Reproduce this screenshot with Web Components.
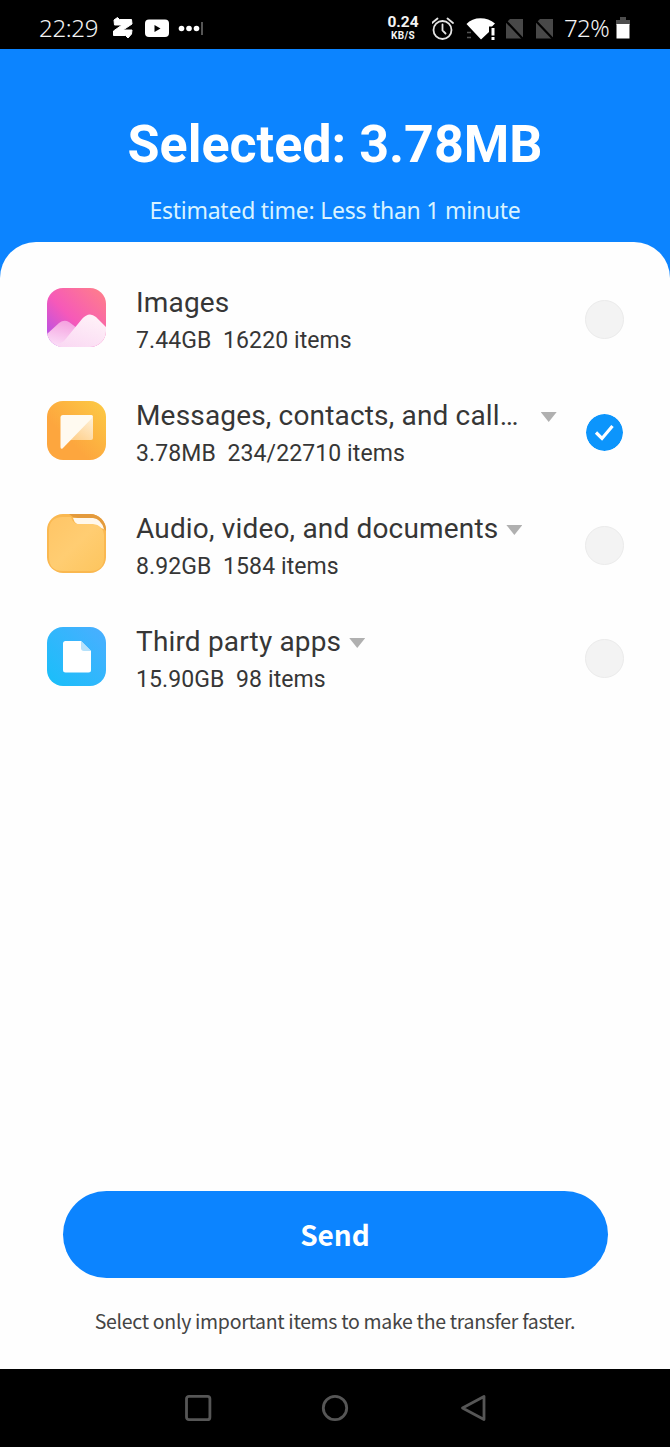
<!DOCTYPE html>
<html lang="en">
<head>
<meta charset="utf-8">
<title>Phone transfer</title>
<style>
  html, body {
    margin: 0;
    height: 100%;
    background: #0c84ff;
  }
</style>
</head>
<body>
<transfer-app></transfer-app>

<script>
/**
 * Status bar at the top of the phone
 */
class StatusBar extends HTMLElement {
  constructor() {
    super();
    this.attachShadow({ mode: 'open' });
    this.shadowRoot.innerHTML = `
      <style>
        :host {
          display: flex;
          justify-content: space-between;
          align-items: center;
          box-sizing: border-box;
          height: 49px;
          padding: 7px 40px 0 39px;
          background: #000;
          color: #f4f4f4;
          font: 300 24px/30px "Noto Sans", sans-serif;
        }

        .side {
          display: flex;
          align-items: center;
        }

        .clock {
          width: 73px;
          letter-spacing: -0.3px;
        }

        .speed {
          width: 32px;
          margin-right: 13px;
          text-align: center;
          font: bold 15.5px/15px Roboto, sans-serif;
        }

        .speed span {
          display: block;
        }

        .speed .unit {
          font-size: 10px;
          line-height: 12px;
          letter-spacing: 0.4px;
        }

        .battery {
          width: 45px;
          letter-spacing: -0.6px;
          margin-right: 7px;
        }

        svg {
          display: block;
          fill: #fff;
        }
      </style>
      <div class="side">
        <span class="clock">22:29</span>
        <svg width="92" height="24" viewBox="0 0 92 24">
          <path d="M2 4 5.500 1.500 7.500 3.500H19.500L20 8 11 14H20L19.500 18 16 22 13.500 19.500H1.500L1.500 15 10 9H2.500Z" stroke="#fff" stroke-linejoin="round"/>
          <rect x="33" y="3.500" width="24" height="17.500" rx="4"/>
          <path d="M42.500 9v7l6-3.500Z" fill="#000"/>
          <circle cx="69.500" cy="12.500" r="2.800"/>
          <circle cx="77" cy="12.500" r="2.800"/>
          <circle cx="84.500" cy="12.500" r="2.800"/>
          <path d="M89.500 6h1v13h-1z" fill="#aaa"/>
        </svg>
      </div>
      <div class="side">
        <div class="speed"><span>0.24</span><span class="unit">KB/S</span></div>
        <svg width="132" height="28" viewBox="0 0 132 28">
          <g fill="none" stroke="#e4e4e4" stroke-width="1.800" stroke-linecap="round">
            <circle cx="10.500" cy="16" r="9"/>
            <path d="M10.500 10.500v6l3 3M0 9 5.500 4.500M15.500 4.500 21 9"/>
          </g>
          <path d="M34.500 10C41 2.500 55 2.500 63 9.500L60 12.500h-3V18L49 25.500Z"/>
          <path d="M59.500 14h3v7.500h-3zM59.500 23h3v3h-3z"/>
          <path d="M35 18.500h4M35 23.500h4" stroke="#555" stroke-width="1.500"/>
          <path d="M78 5h13v19.500H74V9ZM108 5h13v19.500H104V9Z" fill="#484848"/>
          <path d="M72 5 92 26M102 5 122 26" stroke="#000" stroke-width="2.200"/>
        </svg>
        <span class="battery">72%</span>
        <svg width="14" height="22" viewBox="0 0 14 22">
          <path d="M4 0h6v3h4v5H0V3h4z" fill="#4d4d4d"/>
          <path d="M0.500 7h13v14.500h-13z"/>
        </svg>
      </div>
    `;
  }
}

/**
 * Rounded category icon, picked with the name attribute
 */
class CategoryIcon extends HTMLElement {
  constructor() {
    super();
    this.attachShadow({ mode: 'open' });
  }

  connectedCallback() {
    const shapes = {
      images: `
        <linearGradient id="bg" x1="0" y1="1" x2="1" y2="0">
          <stop offset="0" stop-color="#a94ff0"/>
          <stop offset=".45" stop-color="#f659b9"/>
          <stop offset="1" stop-color="#ff8187"/>
        </linearGradient>
        <linearGradient id="back" x1=".6" y1="0" x2=".3" y2="1">
          <stop offset="0" stop-color="#f5a0df"/>
          <stop offset="1" stop-color="#fbdff8"/>
        </linearGradient>
        <linearGradient id="front" x1=".8" y1="0" x2=".2" y2="1">
          <stop offset="0" stop-color="#fff2f8"/>
          <stop offset="1" stop-color="#fad9f3"/>
        </linearGradient>
        <rect width="59" height="59" fill="url(#bg)"/>
        <path d="M0 46 12 35Q17 31 22 34L34 43 32 59H0Z" fill="url(#back)"/>
        <path d="M7 59 17 53 35 31Q42 23 49 29L59 39V59Z" fill="url(#front)"/>`,
      messages: `
        <linearGradient id="bg" x1="0" y1="1" x2="1" y2="0">
          <stop offset=".35" stop-color="#fda63e"/>
          <stop offset="1" stop-color="#fccb45"/>
        </linearGradient>
        <linearGradient id="fold" x1="1" y1="0" x2=".3" y2="1">
          <stop offset="0" stop-color="#fff1d8"/>
          <stop offset="1" stop-color="#fed18f"/>
        </linearGradient>
        <rect width="59" height="59" fill="url(#bg)"/>
        <path d="M22 39H44Q46 39 46 37V16L40 19Z" fill="url(#fold)"/>
        <path d="M16 14H44.500Q46 14 46 16L15.500 47.500Q13.500 48.500 13.500 46V16.500Q13.500 14 16 14Z" fill="#fffaf0"/>`,
      files: `
        <linearGradient id="bg" x1="0" y1="0" x2="1" y2="1">
          <stop offset="0" stop-color="#ffc566"/>
          <stop offset=".5" stop-color="#ffcd72"/>
          <stop offset="1" stop-color="#fdc55e"/>
        </linearGradient>
        <rect width="59" height="59" fill="#fab850"/>
        <path d="M22 0H59V17L51 8 26 3Z" fill="#e39a3c"/>
        <path d="M26 4H46Q54 5 57 15L48 12 30 10Q27 8 26 4Z" fill="#fff8ec"/>
        <path d="M16 3H24Q26 10 31 10H46Q56 11 57 21V43Q57 57 43 57H16Q2 57 2 43V17Q2 3 16 3Z" fill="url(#bg)"/>`,
      apps: `
        <linearGradient id="bg" x1="0" y1="1" x2="1" y2="0">
          <stop offset="0" stop-color="#18bff9"/>
          <stop offset="1" stop-color="#4baeff"/>
        </linearGradient>
        <rect width="59" height="59" fill="url(#bg)"/>
        <path d="M18.500 14H34L44 24V43Q44 45.500 41.500 45.500H18.500Q16 45.500 16 43V16.500Q16 14 18.500 14Z" fill="#fff"/>
        <path d="M34 14 44 24H37Q34 24 34 21Z" fill="#b4e1fb"/>`
    };

    this.shadowRoot.innerHTML = `
      <style>
        :host {
          display: block;
          width: 59px;
          height: 59px;
          border-radius: 16px;
          overflow: hidden;
        }

        svg {
          display: block;
        }
      </style>
      <svg width="59" height="59" viewBox="0 0 59 59">${shapes[this.getAttribute('name')] || ''}</svg>
    `;
  }
}

/**
 * Round checkbox
 */
class RoundCheck extends HTMLElement {
  constructor() {
    super();
    this.attachShadow({ mode: 'open' });
    this.shadowRoot.innerHTML = `
      <style>
        :host {
          display: block;
          box-sizing: border-box;
          width: 39px;
          height: 39px;
          border: 1px solid #ebebeb;
          border-radius: 50%;
          background: #f3f3f3;
        }

        :host([checked]) {
          border-color: #fefefe;
          background: #0c95fc;
          background-clip: padding-box;
        }

        svg {
          display: none;
        }

        :host([checked]) svg {
          display: block;
        }
      </style>
      <svg width="37" height="37" viewBox="0 0 37 37">
        <path d="M10 18.500 16 24.500 26.500 12" fill="none" stroke="#fff" stroke-width="3.200"/>
      </svg>
    `;
  }
}

/**
 * One category: icon, slotted title and details, checkbox
 */
class CategoryRow extends HTMLElement {
  constructor() {
    super();
    this.attachShadow({ mode: 'open' });
  }

  connectedCallback() {
    const checked = this.hasAttribute('checked') ? 'checked' : '';
    this.shadowRoot.innerHTML = `
      <style>
        :host {
          display: grid;
          grid-template-columns: 59px 1fr 39px;
          column-gap: 30px;
          align-items: center;
          height: 113px;
          padding: 0 46px 0 47px;
          color: #363636;
          font-family: Roboto, sans-serif;
        }

        .text {
          padding-top: 10px;
          min-width: 0;
          white-space: nowrap;
        }

        .title {
          display: flex;
          align-items: center;
          height: 37px;
          font-size: 28px;
          letter-spacing: 0.17px;
        }

        .arrow {
          display: none;
          flex: none;
          width: 16px;
          height: 10px;
          margin: 3px 0 0 var(--arrow-gap, 8px);
          background: #b0b0b0;
          clip-path: polygon(0 0, 100% 0, 50% 100%);
        }

        :host([expandable]) .arrow {
          display: block;
        }

        .details {
          height: 40px;
          font-size: 23px;
          letter-spacing: 0.1px;
          line-height: 40px;
          white-space: pre;
        }

        round-check {
          margin-top: 4px;
        }
      </style>
      <category-icon name="${this.getAttribute('icon')}"></category-icon>
      <div class="text">
        <div class="title"><slot></slot><span class="arrow"></span></div>
        <div class="details"><slot name="details"></slot></div>
      </div>
      <round-check ${checked}></round-check>
    `;
  }
}

/**
 * Send button
 */
class SendButton extends HTMLElement {
  constructor() {
    super();
    this.attachShadow({ mode: 'open' });
    this.shadowRoot.innerHTML = `
      <style>
        :host {
          display: block;
        }

        button {
          display: block;
          width: 100%;
          height: 87px;
          padding: 0 0 1px;
          border: 0;
          border-radius: 44px;
          background: #0c84ff;
          color: #fff;
          font: bold 28px/40px "Noto Sans CJK SC", sans-serif;
        }
      </style>
      <button><slot></slot></button>
    `;
  }
}

/**
 * System navigation bar
 */
class NavBar extends HTMLElement {
  constructor() {
    super();
    this.attachShadow({ mode: 'open' });
    this.shadowRoot.innerHTML = `
      <style>
        :host {
          display: flex;
          justify-content: center;
          align-items: center;
          height: 78px;
          background: #000;
        }

        svg {
          fill: none;
          stroke: #565656;
          stroke-width: 2.8;
          stroke-linejoin: round;
        }
      </style>
      <svg width="302" height="30" viewBox="0 0 302 30">
        <rect x="2.500" y="3.300" width="23.400" height="23.400" rx="2.500"/>
        <circle cx="151" cy="15" r="11.700"/>
        <path d="M278.500 15 300 3.500V26.500Z"/>
      </svg>
    `;
  }
}

/**
 * Whole screen
 */
class TransferApp extends HTMLElement {
  constructor() {
    super();
    this.attachShadow({ mode: 'open' });
    this.shadowRoot.innerHTML = `
      <style>
        :host {
          display: flex;
          flex-direction: column;
          height: 100vh;
          background: #0c84ff;
        }

        header {
          box-sizing: border-box;
          height: 193px;
          padding-top: 60px;
          color: #fff;
          text-align: center;
        }

        h1 {
          margin: 0;
          font: bold 52px/72px Roboto, sans-serif;
        }

        header p {
          margin: 13px 0 0;
          color: #d9f3ff;
          font: 23px/32px "Noto Sans", sans-serif;
          letter-spacing: -0.25px;
        }

        main {
          flex: 1;
          display: flex;
          flex-direction: column;
          padding-top: 19px;
          border-radius: 36px 36px 0 0;
          background: #fefefe;
        }

        footer {
          margin-top: auto;
          padding: 0 62.5px 32px;
          text-align: center;
        }

        footer p {
          margin: 27px -40px 0;
          color: #444;
          font: 19.5px/32px "Noto Sans CJK SC", sans-serif;
          letter-spacing: -0.31px;
        }
      </style>
      <status-bar></status-bar>
      <header>
        <h1>Selected: 3.78MB</h1>
        <p>Estimated time: Less than 1 minute</p>
      </header>
      <main>
        <category-row icon="images">Images<span slot="details">7.44GB  16220 items</span></category-row>
        <category-row icon="messages" expandable checked style="--arrow-gap: 22px">Messages, contacts, and call…<span slot="details">3.78MB  234/22710 items</span></category-row>
        <category-row icon="files" expandable>Audio, video, and documents<span slot="details">8.92GB  1584 items</span></category-row>
        <category-row icon="apps" expandable>Third party apps<span slot="details">15.90GB  98 items</span></category-row>
        <footer>
          <send-button>Send</send-button>
          <p>Select only important items to make the transfer faster.</p>
        </footer>
      </main>
      <nav-bar></nav-bar>
    `;
  }
}

customElements.define('status-bar', StatusBar);
customElements.define('category-icon', CategoryIcon);
customElements.define('round-check', RoundCheck);
customElements.define('category-row', CategoryRow);
customElements.define('send-button', SendButton);
customElements.define('nav-bar', NavBar);
customElements.define('transfer-app', TransferApp);
</script>
</body>
</html>
